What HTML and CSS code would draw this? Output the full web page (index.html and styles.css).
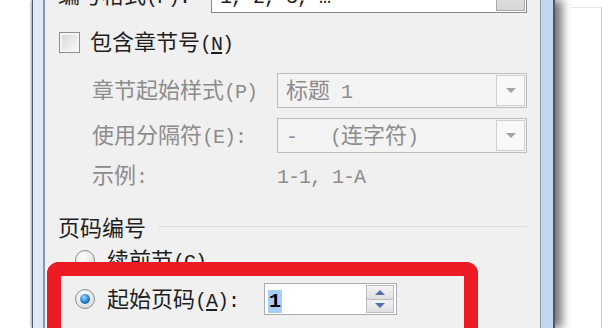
FILE: index.html
```html
<!DOCTYPE html>
<html lang="zh-CN">
<head>
    <meta charset="UTF-8">
    <title>页码格式</title>
    <link rel="stylesheet" href="styles.css">
</head>
<body>
    <div class="window">
        <div class="dialog">
            <div class="row row-format">
                <span class="label label-format">编号格式<span class="hw">(F):</span></span>
                <div class="combo combo-on">
                    <span class="combo-text"><span class="hw">1, 2, 3, …</span></span>
                    <span class="drop-btn drop-on"></span>
                </div>
            </div>

            <div class="row row-check">
                <span class="checkbox"></span>
                <span class="label">包含章节号<span class="hw">(<u>N</u>)</span></span>
            </div>

            <div class="row row-sub">
                <span class="label label-sub muted">章节起始样式<span class="hw">(P)</span></span>
                <div class="combo combo-off">
                    <span class="combo-text muted">标题<span class="hw"> 1</span></span>
                    <span class="drop-btn"><span class="tri tri-down"></span></span>
                </div>
            </div>

            <div class="row row-sub row-sep">
                <span class="label label-sub muted">使用分隔符<span class="hw">(E):</span></span>
                <div class="combo combo-off">
                    <span class="combo-text muted"><span class="hw">-   (</span>连字符<span class="hw">)</span></span>
                    <span class="drop-btn"><span class="tri tri-down"></span></span>
                </div>
            </div>

            <div class="row row-example">
                <span class="label label-sub muted">示例<span class="hw">:</span></span>
                <span class="example muted"><span class="hw">1-1, 1-A</span></span>
            </div>

            <div class="row group-title">
                <span class="label">页码编号</span>
                <span class="rule"></span>
            </div>

            <div class="row row-radio">
                <span class="radio"></span>
                <span class="label">续前节<span class="hw">(C)</span></span>
            </div>

            <div class="row row-radio row-start">
                <span class="radio radio-on"></span>
                <span class="label label-start">起始页码<span class="hw">(<u>A</u>):</span></span>
                <div class="spin">
                    <span class="spin-text"><span class="hw sel">1</span></span>
                    <span class="spin-btns">
                        <span class="spin-btn"><span class="tri tri-up"></span></span>
                        <span class="spin-btn"><span class="tri tri-down blue"></span></span>
                    </span>
                </div>
            </div>
        </div>
    </div>
    <div class="behind"></div>

    <div class="highlight"></div>
</body>
</html>
```

FILE: styles.css
```css
body {
    margin: 0;
    width: 611px;
    height: 328px;
    overflow: hidden;
    background-color: white;
    display: flex;
    align-items: flex-start;
    font-family: "Noto Sans CJK SC", sans-serif;
    font-size: 22px;
    color: #1e1e1e;
    position: relative;
}
.window {
    margin-left: 32px;
    width: 523px;
    height: 328px;
    box-sizing: border-box;
    border-left: 1px solid #4f5966;
    border-right: 2px solid #4f5966;
    padding: 0 12px 0 10px;
    background: linear-gradient(to right, #dfeaf8, #c2d7ef);
    box-shadow: 7px 0 9px rgba(0,0,0,0.55), -1px 0 2px rgba(0,0,0,0.35);
    display: flex;
    overflow: hidden;
}
.dialog {
    flex-grow: 1;
    background-color: #f0f0f0;
    border-left: 2px solid #8798ad;
    border-right: 1px solid #8798ad;
    padding: 0 13px;
    display: flex;
    flex-direction: column;
}
.behind {
    margin: 7px 0 0 15px;
    width: 31px;
    height: 321px;
    border-top: 1px solid #e6e6e6;
    border-right: 1px solid #c9c9c9;
}
.row {
    display: flex;
    align-items: center;
    flex-shrink: 0;
}
.label {
    line-height: 30px;
    white-space: pre;
}
.hw {
    font-family: "Liberation Mono", monospace;
    font-size: 20px;
    letter-spacing: -1px;
    white-space: pre;
}
u {
    text-underline-offset: 2px;
}
.muted {
    color: #8c8c8c;
}
.row-format {
    margin-top: -22px;
    height: 35px;
}
.label-format {
    width: 153px;
}
.combo {
    height: 35px;
    box-sizing: border-box;
    display: flex;
    align-items: center;
    justify-content: space-between;
    padding: 0 1px 0 8px;
}
.combo-on {
    width: 316px;
    background-color: white;
    border: 1px solid #8a8a8a;
}
.combo-off {
    width: 250px;
    background-color: #f3f3f3;
    border: 1px solid #bdbdbd;
}
.combo-text {
    line-height: 30px;
}
.drop-btn {
    width: 29px;
    height: 31px;
    box-sizing: border-box;
    border: 1px solid #cfcfcf;
    background-color: #f8f8f8;
    display: flex;
    align-items: center;
    justify-content: center;
}
.drop-on {
    background: linear-gradient(#e9e9e9, #d6d6d6);
    border-color: #a9a9a9;
}
.tri {
    width: 0;
    height: 0;
    border-left: 5px solid transparent;
    border-right: 5px solid transparent;
}
.tri-down {
    border-top: 5px solid #a3a3a3;
}
.tri-up {
    border-bottom: 5px solid #4f6fa6;
}
.tri-down.blue {
    border-top-color: #4f6fa6;
}
.row-check {
    margin-top: 12px;
    height: 35px;
}
.checkbox {
    width: 21px;
    height: 21px;
    box-sizing: border-box;
    margin: 0 10px 0 1px;
    border: 1px solid #8f8f8f;
    background: linear-gradient(135deg, #d6d6d6, #fbfbfb);
    box-shadow: inset 0 0 0 2px #f4f4f4;
}
.row-sub {
    margin-top: 13px;
    height: 35px;
    padding-left: 34px;
}
.row-sep {
    margin-top: 10px;
}
.label-sub {
    width: 185px;
}
.row-example {
    margin-top: 7px;
    height: 30px;
    padding-left: 34px;
}
.example {
    line-height: 30px;
}
.group-title {
    margin-top: 21px;
    height: 30px;
}
.rule {
    flex-grow: 1;
    margin-left: 12px;
    border-top: 1px solid #d6dde3;
}
.row-radio {
    margin-top: 4px;
    height: 30px;
    padding-left: 17px;
}
.radio {
    width: 20px;
    height: 20px;
    box-sizing: border-box;
    margin-right: 12px;
    border-radius: 50%;
    border: 1px solid #8e8f8f;
    background: radial-gradient(circle at 40% 35%, #ffffff, #d4d4d4);
    display: flex;
    align-items: center;
    justify-content: center;
}
.radio-on::after {
    content: "";
    width: 10px;
    height: 10px;
    border-radius: 50%;
    background: radial-gradient(circle at 40% 35%, #9ad8ff, #1c73c2 60%, #0b4a86);
}
.row-start {
    margin-top: 8px;
    height: 32px;
}
.label-start {
    width: 157px;
}
.spin {
    width: 133px;
    height: 32px;
    box-sizing: border-box;
    border: 1px solid #a9abb0;
    background-color: white;
    display: flex;
    align-items: center;
    justify-content: space-between;
    padding: 1px 2px 1px 3px;
}
.spin-text {
    line-height: 26px;
}
.sel {
    background-color: #a6cdf2;
    color: black;
    font-weight: bold;
    letter-spacing: 0;
    padding: 0 1px;
}
.spin-btns {
    width: 28px;
    height: 28px;
    display: flex;
    flex-direction: column;
}
.spin-btn {
    flex-grow: 1;
    border: 1px solid #bcbcbc;
    background: linear-gradient(#f4f4f4, #dedede);
    display: flex;
    align-items: center;
    justify-content: center;
}
.spin-btn + .spin-btn {
    border-top: none;
}
.highlight {
    position: absolute;
    left: 47px;
    top: 262px;
    width: 431px;
    height: 66px;
    box-sizing: border-box;
    border: 14px solid #ed1c24;
    border-bottom: 0;
    border-radius: 12px 12px 0 0;
}
```
